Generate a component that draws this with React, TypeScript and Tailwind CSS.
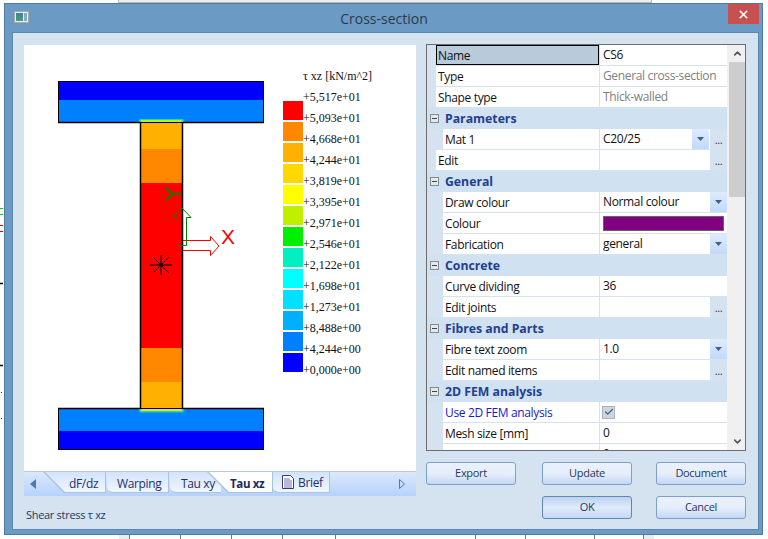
import { Check, ChevronDown, ChevronUp, X } from "lucide-react";
import type { ReactNode } from "react";

const legendColours = [
  "bg-[#ff0000]",
  "bg-[#ff8800]",
  "bg-[#ffb000]",
  "bg-[#ffd800]",
  "bg-[#ffff00]",
  "bg-[#c0f000]",
  "bg-[#00f000]",
  "bg-[#00f0c0]",
  "bg-[#00ffff]",
  "bg-[#00e0ff]",
  "bg-[#00b0ff]",
  "bg-[#0080ff]",
  "bg-[#0000ff]",
];

const legendLabels = [
  "+5,517e+01",
  "+5,093e+01",
  "+4,668e+01",
  "+4,244e+01",
  "+3,819e+01",
  "+3,395e+01",
  "+2,971e+01",
  "+2,546e+01",
  "+2,122e+01",
  "+1,698e+01",
  "+1,273e+01",
  "+8,488e+00",
  "+4,244e+00",
  "+0,000e+00",
];

function Section() {
  return (
    <svg width="259" height="427" viewBox="24 45 259 427" className="shrink-0">
      {/* top flange */}
      <rect x="58" y="81" width="206" height="19" fill="#0000ff" />
      <rect x="58" y="100" width="206" height="23" fill="#0080ff" />
      <rect x="58.5" y="81.5" width="205" height="41" fill="none" stroke="#000" />
      {/* web */}
      <rect x="140" y="123" width="43" height="26" fill="#ffb000" />
      <rect x="140" y="149" width="43" height="34" fill="#ff8800" />
      <rect x="140" y="183" width="43" height="165" fill="#ff0000" />
      <rect x="140" y="348" width="43" height="34" fill="#ff8800" />
      <rect x="140" y="382" width="43" height="26" fill="#ffb000" />
      {/* bottom flange */}
      <rect x="58" y="408" width="206" height="23" fill="#0080ff" />
      <rect x="58" y="431" width="206" height="19" fill="#0000ff" />
      <rect x="58.5" y="408.5" width="205" height="41" fill="none" stroke="#000" />
      {/* stress peaks at the fillets */}
      <polygon points="138,122 140,119 183,119 185,122" fill="#00e0d0" />
      <polygon points="140,122 141,120 182,120 183,122" fill="#c0f000" />
      <polygon points="138,409 140,412.5 183,412.5 185,409" fill="#00e0d0" />
      <polygon points="140,409 141,411 182,411 183,409" fill="#ffe000" />
      <path d="M58 122.5H140.5V408.5H58M264 122.5H182.5V408.5H264" fill="none" stroke="#000" strokeWidth="1.5" />
      {/* centre of gravity */}
      <g stroke="#000" strokeWidth="1">
        <path d="M150 265H172M161 255V275M153.500 257.500L168.500 272.500M168.500 257.500L153.500 272.500" />
      </g>
      <circle cx="161" cy="265" r="1.800" fill="#000" />
      {/* axes */}
      <path d="M183 240.500H210.500V236.500L219 246L210.500 255.500V250.500H183" fill="none" stroke="#ff0000" />
      <path d="M177.500 245.500V217.500H173L182 208L191 217.500H186.500V245.500Z" fill="none" stroke="#008000" />
      <path d="M166 188L172.500 194L166 200M172.500 194H181" fill="none" stroke="#008000" strokeWidth="2" />
      <text x="221" y="244" fill="#ff0000" fontSize="21" fontFamily="'Liberation Sans', sans-serif">X</text>
    </svg>
  );
}

function Legend() {
  return (
    <div className="flex font-['Liberation_Serif',serif] text-[12px] leading-[21px] text-[#111]">
      <div className="flex w-[20px] flex-col gap-[2px] pt-[56px]">
        {legendColours.map((c) => (
          <div key={c} className={`h-[19px] ${c}`} />
        ))}
      </div>
      <div className="pt-[21px] whitespace-nowrap">
        <div>τ xz [kN/m^2]</div>
        {legendLabels.map((l, i) => (
          <div key={i}>{l}</div>
        ))}
      </div>
    </div>
  );
}

function TabBar() {
  return (
    <div className="flex h-[24px] bg-gradient-to-b from-[#dce8fb] to-[#b6d2fb] text-[12px] leading-[23px] tracking-[-0.35px] text-[#1e2f6b]">
      <div className="flex w-[19px] items-center pb-[1px] pl-[6px]">
        <svg width="6" height="10" viewBox="0 0 6 10">
          <path d="M6 0V10L0 5Z" fill="#4f79ad" />
        </svg>
      </div>
      {/* dF/dz */}
      <div className="h-[21px] w-[63px] bg-[#a9c4e2] [clip-path:polygon(0_0,100%_0,100%_100%,21px_100%)]">
        <div className="h-[20px] w-[62px] bg-gradient-to-b from-[#d3e3fa] to-[#eff7ff] pl-[26px] [clip-path:polygon(2px_0,100%_0,100%_100%,22px_100%)]">
          dF/dz
        </div>
      </div>
      <div className="ml-[1px] h-[21px] w-[62px] rounded-bl-[6px] border-r border-b border-[#a9c4e2] bg-gradient-to-b from-[#d3e3fa] to-[#eff7ff] pl-[10px]">
        Warping
      </div>
      <div className="ml-[1px] h-[21px] w-[51px] rounded-bl-[6px] border-b border-[#a9c4e2] bg-gradient-to-b from-[#d3e3fa] to-[#eff7ff] pl-[11px]">
        Tau xy
      </div>
      <div className="z-10 -ml-[14px] h-[21px] w-[66px] bg-[#a9c4e2] [clip-path:polygon(0_0,100%_0,100%_100%,21px_100%)]">
        <div className="h-[20px] w-[65px] bg-white pl-[23px] text-[11.5px] font-bold text-[#1b2a5c] [clip-path:polygon(2px_0,100%_0,100%_100%,22px_100%)]">
          Tau xz
        </div>
      </div>
      <div className="flex h-[21px] w-[57px] items-center gap-[4px] rounded-bl-[6px] border-r border-b border-[#a9c4e2] bg-gradient-to-b from-[#d3e3fa] to-[#eff7ff] pl-[9px]">
        <svg width="12" height="14" viewBox="0 0 12 14" className="shrink-0">
          <path d="M0.500 0.500H8.500L11.500 3.500V13.500H0.500Z" fill="#fff" stroke="#3c3c64" />
          <path d="M2 4H8M2 6H10M2 8H10M2 10H10M2 12H10" stroke="#6f6fc0" />
        </svg>
        <span>Brief</span>
      </div>
      <div className="ml-auto flex items-center pr-[11px] pb-[1px]">
        <svg width="6" height="10" viewBox="0 0 6 10">
          <path d="M0.500 0.500V9.500L5.500 5Z" fill="none" stroke="#4f79ad" />
        </svg>
      </div>
    </div>
  );
}

function GroupRow({ title }: { title: string }) {
  return (
    <div className="flex h-[21px] items-center bg-[#d0e1f1]">
      <span className="ml-[3px] flex h-[9px] w-[9px] items-center justify-center border border-[#8a8a8a] bg-[#dfe9f3]">
        <span className="h-px w-[5px] bg-[#444]" />
      </span>
      <span className="ml-[6px] pt-[1px] text-[12.25px] font-bold tracking-normal text-[#1f3f8f]">{title}</span>
    </div>
  );
}

function DropButton() {
  return (
    <span className="flex h-[20px] w-[17px] shrink-0 items-center justify-center bg-gradient-to-b from-[#dfebfc] to-[#c2d9fb]">
      <svg width="7" height="4" viewBox="0 0 7 4">
        <path d="M0 0H7L3.500 4Z" fill="#3f5f8f" />
      </svg>
    </span>
  );
}

function DotsButton() {
  return (
    <span className="ml-px flex h-[20px] w-[17px] shrink-0 items-end justify-center bg-[#d5e3f1] pb-[3px] text-[11px] leading-[12px] text-[#1e395b]">
      ...
    </span>
  );
}

function Row({
  label,
  indent = true,
  labelClass = "text-[#111]",
  selected = false,
  children,
}: {
  label: string;
  indent?: boolean;
  labelClass?: string;
  selected?: boolean;
  children?: ReactNode;
}) {
  return (
    <div className="flex h-[21px] border-b border-[#d5e3f1] bg-[#d5e3f1]">
      <div
        className={`flex shrink-0 items-center pt-[1px] ${indent ? "ml-[16px] w-[156px]" : "ml-[9px] w-[163px]"} ${
          selected ? "border border-black bg-[#b9cbdb] pl-[1px]" : "bg-white pl-[2px]"
        } ${labelClass}`}
      >
        {label}
      </div>
      <div className="ml-px flex w-[127px] items-center justify-between bg-white text-[#111]">{children}</div>
    </div>
  );
}

function Value({ children, muted = false }: { children?: ReactNode; muted?: boolean }) {
  return <span className={`pb-[1px] pl-[3px] ${muted ? "text-[#808080]" : ""}`}>{children}</span>;
}

function PropertyGrid() {
  return (
    <div className="relative h-[407px] overflow-hidden border border-[#6d6d6d] bg-[#d5e3f1] text-[12px] tracking-[-0.35px]">
      <div className="w-[300px]">
        <Row label="Name" indent={false} selected>
          <Value>CS6</Value>
        </Row>
        <Row label="Type" indent={false}>
          <Value muted>General cross-section</Value>
        </Row>
        <Row label="Shape type" indent={false}>
          <Value muted>Thick-walled</Value>
        </Row>
        <GroupRow title="Parameters" />
        <Row label="Mat 1">
          <Value>C20/25</Value>
          <span className="flex">
            <DropButton />
            <DotsButton />
          </span>
        </Row>
        <Row label="Edit" indent={false}>
          <Value />
          <DotsButton />
        </Row>
        <GroupRow title="General" />
        <Row label="Draw colour">
          <Value>Normal colour</Value>
          <DropButton />
        </Row>
        <Row label="Colour">
          <span className="ml-[3px] h-[15px] w-[121px] border border-[#666] bg-[#800080]" />
        </Row>
        <Row label="Fabrication">
          <Value>general</Value>
          <DropButton />
        </Row>
        <GroupRow title="Concrete" />
        <Row label="Curve dividing">
          <Value>36</Value>
        </Row>
        <Row label="Edit joints">
          <Value />
          <DotsButton />
        </Row>
        <GroupRow title="Fibres and Parts" />
        <Row label="Fibre text zoom">
          <Value>1.0</Value>
          <DropButton />
        </Row>
        <Row label="Edit named items">
          <Value />
          <DotsButton />
        </Row>
        <GroupRow title="2D FEM analysis" />
        <Row label="Use 2D FEM analysis" labelClass="text-[#1a1ad0]">
          <span className="ml-[2px] flex h-[13px] w-[13px] items-center justify-center border border-[#a9b4bf] bg-[#ccd6e0]">
            <Check size={10} strokeWidth={3} className="text-[#4a5a78]" />
          </span>
        </Row>
        <Row label="Mesh size [mm]">
          <Value>0</Value>
        </Row>
        <Row label="">
          <Value>0</Value>
        </Row>
      </div>
      {/* scrollbar */}
      <div className="absolute top-0 right-0 bottom-0 flex w-[18px] flex-col items-end bg-[#f0f0f0]">
        <div className="flex h-[17px] w-[16px] items-center justify-center">
          <ChevronUp size={11} strokeWidth={3.5} className="text-[#555]" />
        </div>
        <div className="h-[135px] w-[16px] bg-[#cdcdcd]" />
        <div className="mt-auto flex h-[18px] w-[16px] items-center justify-center">
          <ChevronDown size={11} strokeWidth={3.5} className="text-[#555]" />
        </div>
      </div>
    </div>
  );
}

function Button({ label, primary = false }: { label: string; primary?: boolean }) {
  return (
    <div
      className={`flex h-[23px] w-[90px] items-center justify-center rounded-[3px] border text-[11px] tracking-[-0.3px] text-[#1e395b] ${
        primary
          ? "border-[#5f86b5] bg-gradient-to-b from-[#bcd2f0] via-[#dfeafa] to-[#c5d9f5]"
          : "border-[#7ba0cc] bg-gradient-to-b from-[#eaf1fc] via-[#e6eefb] to-[#c4d8f4]"
      }`}
    >
      {label}
    </div>
  );
}

export default function App() {
  return (
    <div className="flex h-[539px] w-[768px] flex-col overflow-hidden bg-white font-['Open_Sans',sans-serif]">
      {/* window behind the dialog */}
      <div className="ml-[118px] h-[3px] w-[534px] shrink-0 border-x border-b border-[#bbb] bg-[#ececec]" />
      <div className="flex h-[532px] shrink-0">
        <svg width="4" height="532" viewBox="0 3 4 532" className="shrink-0">
          <path d="M0 208.500H3M0 214.500H3" stroke="#00d000" />
          <path d="M0 225.500H3M0 231.500H3" stroke="#f00000" />
          <path d="M0 283.500H3M0 365.500H3" stroke="#000" strokeWidth="1.500" />
          <path d="M1 392.500H2M1 418.500H2" stroke="#333" />
        </svg>
        <div className="flex w-[759px] shrink-0 flex-col border border-[#4f7ba3] bg-[#6b9ac4] pr-[3px] pb-[4px] pl-[7px]">
          <div className="flex h-[28px] shrink-0 items-start">
            <div className="mt-[7px] ml-[2px] flex h-[12px] w-[15px] gap-px border border-[#aaa] bg-[#e8eef0] p-px">
              <div className="w-[7px] bg-gradient-to-b from-[#3f7f9f] to-[#4f9f6f]" />
              <div className="w-[3px] bg-[#7fb0c8]" />
            </div>
            <div className="flex-1 pt-[4px] pl-[11px] text-center text-[14px] leading-[22px] text-[#2b3a4a]">
              Cross-section
            </div>
            <div className="flex h-[20px] w-[31px] items-center justify-center bg-[#c75050]">
              <X size={13} strokeWidth={3} className="text-white" />
            </div>
          </div>
          <div className="flex flex-1 gap-[10px] border border-[#5b87ad] bg-[#d5e3f1] pt-[11px] pl-[11px]">
            <div className="mt-[1px] w-[392px] shrink-0">
              <div className="flex h-[427px] border-b border-[#b3cbe3] bg-white">
                <Section />
                <Legend />
              </div>
              <TabBar />
              <div className="pt-[10px] pl-[2px] text-[11px] leading-[18px] tracking-[-0.3px] text-[#1e395b]">
                Shear stress τ xz
              </div>
            </div>
            <div className="w-[320px] shrink-0">
              <PropertyGrid />
              <div className="mt-[11px] flex justify-between">
                <Button label="Export" />
                <div className="flex gap-[24px]">
                  <Button label="Update" />
                  <Button label="Document" />
                </div>
              </div>
              <div className="mt-[11px] flex justify-end gap-[24px]">
                <Button label="OK" primary />
                <Button label="Cancel" />
              </div>
            </div>
          </div>
        </div>
      </div>
      <svg width="768" height="4" viewBox="0 0 768 4" className="shrink-0">
        <rect x="119" width="10" height="4" fill="#ececec" />
        <rect x="643" width="11" height="4" fill="#ececec" />
        <path d="M129.500 0V4M180.500 0V4M231.500 0V4M282.500 0V4M335.500 0V4M475.500 0V4M525.500 0V4M594.500 0V4M643.500 0V4" stroke="#777" />
      </svg>
    </div>
  );
}
